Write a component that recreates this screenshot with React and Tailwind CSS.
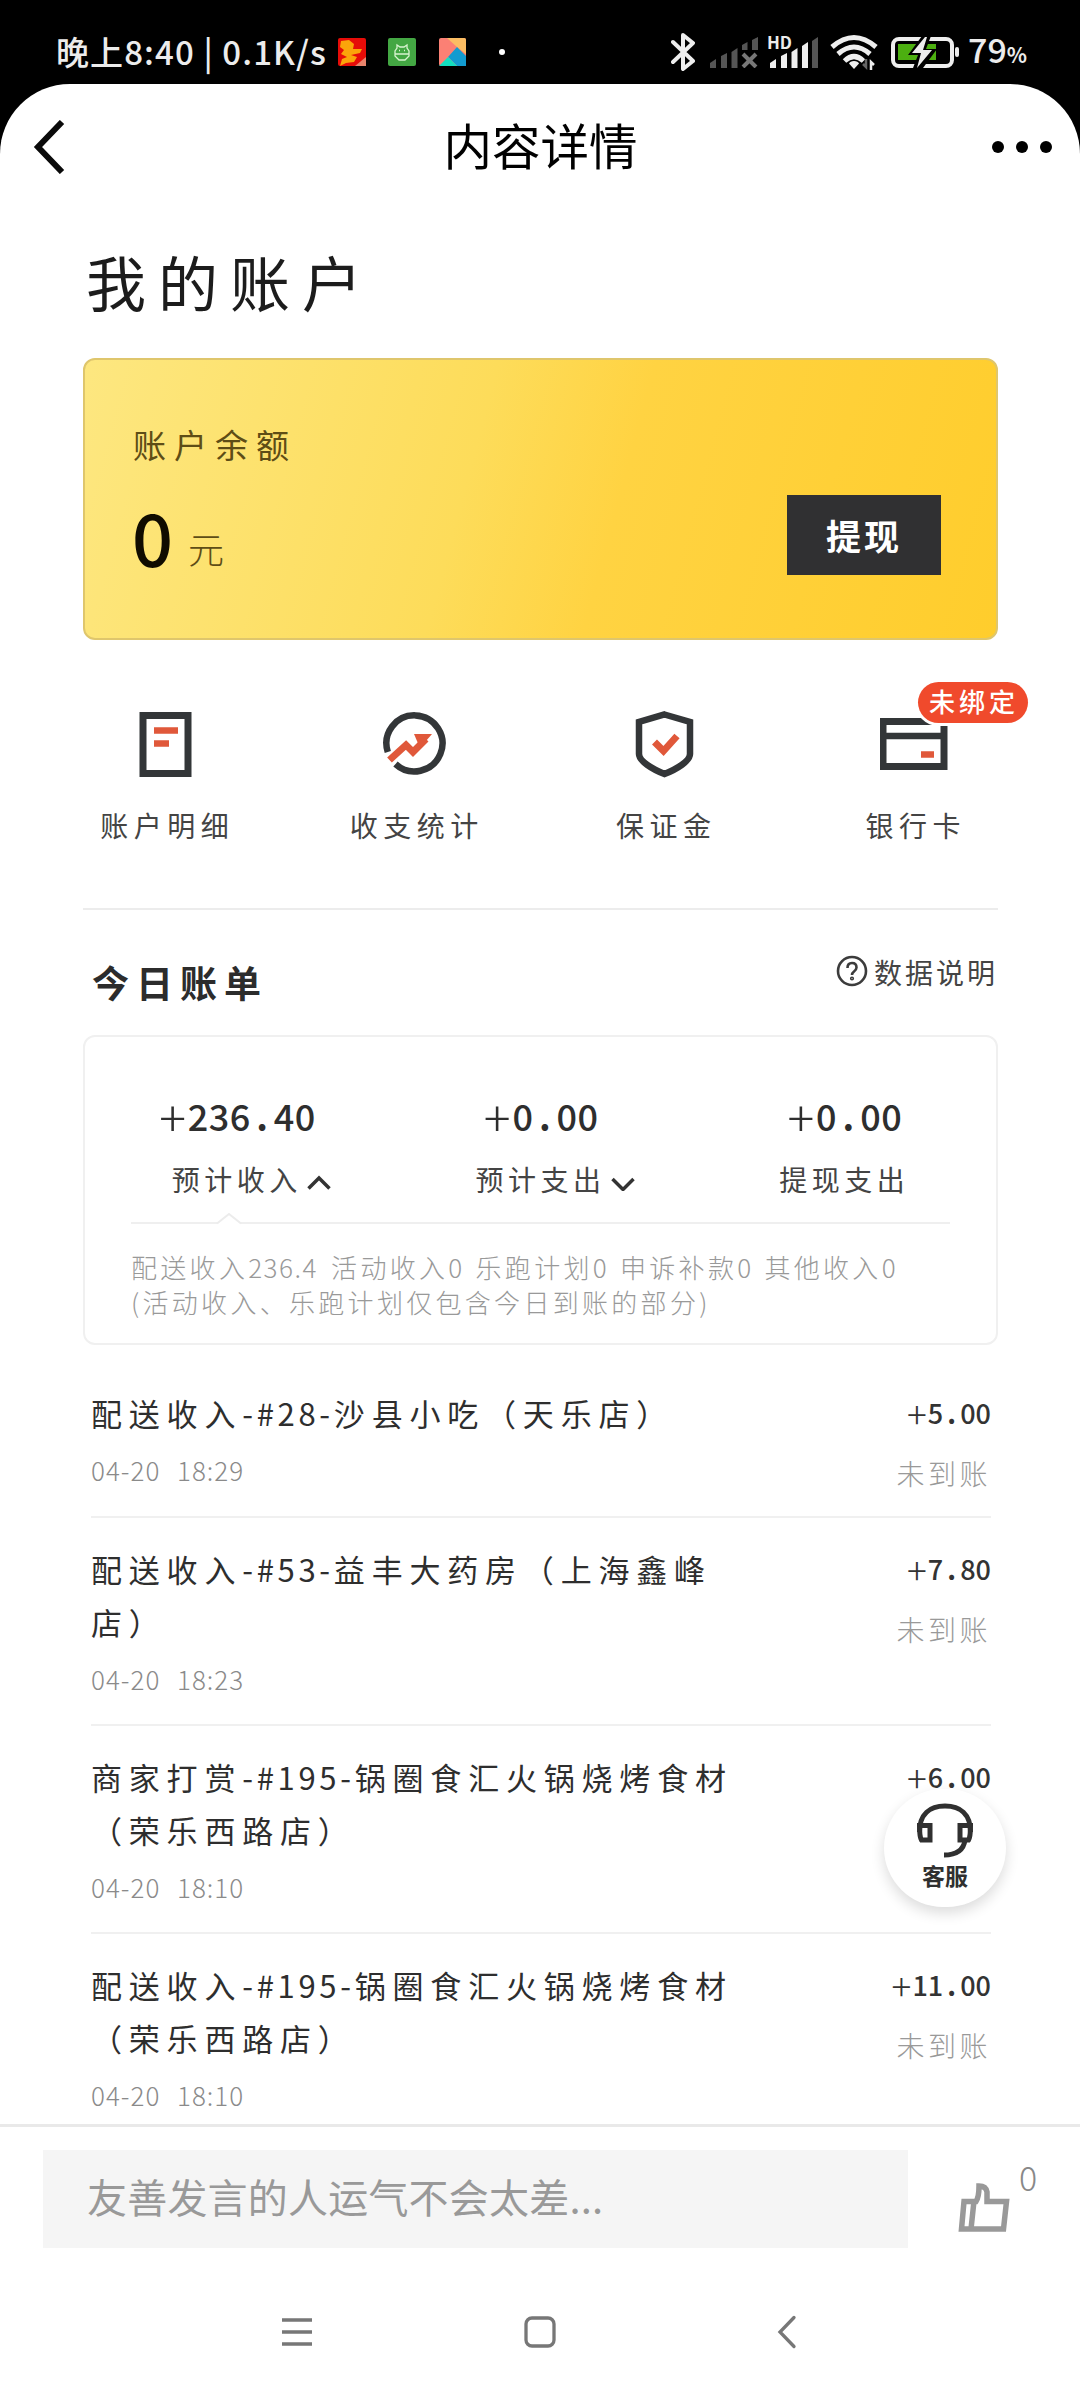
const actions = [
  { label: '账户明细', icon: <DetailIcon /> },
  { label: '收支统计', icon: <StatsIcon /> },
  { label: '保证金', icon: <ShieldIcon /> },
  { label: '银行卡', icon: <BankCardIcon />, badge: '未绑定' },
]

const summary = [
  { value: '+236.40', label: '预计收入', arrow: 'up' },
  { value: '+0.00', label: '预计支出', arrow: 'down' },
  { value: '+0.00', label: '提现支出' },
]

const records = [
  { lines: [['配送收入', '-#28-', '沙县小吃（天乐店）']], time: '04-20 18:29', amount: '+5.00', status: '未到账' },
  { lines: [['配送收入', '-#53-', '益丰大药房（上海鑫峰'], ['店）']], time: '04-20 18:23', amount: '+7.80', status: '未到账' },
  { lines: [['商家打赏', '-#195-', '锅圈食汇火锅烧烤食材'], ['（荣乐西路店）']], time: '04-20 18:10', amount: '+6.00' },
  { lines: [['配送收入', '-#195-', '锅圈食汇火锅烧烤食材'], ['（荣乐西路店）']], time: '04-20 18:10', amount: '+11.00', status: '未到账' },
]

function DetailIcon() {
  return (
    <svg width="68" height="68" viewBox="0 0 68 68" fill="none">
      <rect x="11" y="5.5" width="45" height="58" stroke="#333638" strokeWidth="7" />
      <path d="M22 20.5h24M22 33.5h15" stroke="#e0583a" strokeWidth="6.5" />
    </svg>
  )
}

function StatsIcon() {
  return (
    <svg width="68" height="68" viewBox="0 0 68 68" fill="none">
      <path d="M6.8 42A28 28 0 1 1 14.5 54" stroke="#333638" strokeWidth="6.5" />
      <path d="M8.5 50 25 35l7 7 13-13" stroke="#e0583a" strokeWidth="7" />
      <path d="M33 24h18L39 38z" fill="#e0583a" />
    </svg>
  )
}

function ShieldIcon() {
  return (
    <svg width="68" height="68" viewBox="0 0 68 68" fill="none">
      <path d="M33.5 4.5 59 12v32c0 7-13 15-25.5 20C21 59 8 51 8 44V12z" stroke="#333638" strokeWidth="6.5" />
      <path d="M23.5 32l9 9L46 26" stroke="#e0583a" strokeWidth="7" />
    </svg>
  )
}

function BankCardIcon() {
  return (
    <svg width="68" height="68" viewBox="0 0 68 68" fill="none">
      <rect x="3" y="11.5" width="61" height="45" stroke="#333638" strokeWidth="7" />
      <path d="M3 26h61" stroke="#333638" strokeWidth="6.5" />
      <path d="M41 44.5h13" stroke="#e0583a" strokeWidth="6.5" />
    </svg>
  )
}

function SignalBars({ muted }) {
  return (
    <svg width="48" height="32" viewBox="0 0 48 32">
      <g fill={muted ? '#555' : '#eee'}>
        <path d="M0 32v-5l6-4v9zM11 32V20l6-3v15zM21.5 32V16l6-4v20z" />
        {muted ? (
          <path d="M32 14V9l5.5-3v8zM42 14V4l6-3v13z" />
        ) : (
          <path d="M32 32V10l6-4v26z" />
        )}
      </g>
      {muted ? (
        <path d="M33 18l13 13M46 18 33 31" stroke="#777" strokeWidth="4" />
      ) : (
        <path d="M42 32V5l6-4v31z" fill="#555" />
      )}
    </svg>
  )
}

function StatusBar() {
  return (
    <div className="flex h-[84px] items-center bg-black pt-[20px] text-[#ececec]">
      <div className="mb-[2px] ml-[56px] w-[270px] whitespace-nowrap text-[33px] leading-[32px] font-medium tracking-[1.1px]">
        晚上8:40 | 0.1K/s
      </div>
      <svg className="ml-[12px]" width="28" height="28" viewBox="0 0 28 28">
        <rect width="28" height="28" rx="2" fill="#e60c08" />
        <path d="M3 3l8-1 5 4-1 5h9l-2 4-9 2 6 2-3 5-8 1-6 3 2-7 5-2-6-3 3-4-4-3z" fill="#fba40a" />
        <path d="M17 28l11-9v9z" fill="#e8846c" />
      </svg>
      <svg className="ml-[22px]" width="28" height="28" viewBox="0 0 28 28" fill="none" stroke="#d8f3d0" strokeWidth="1.3">
        <rect width="28" height="28" rx="2" fill="#43a743" stroke="none" />
        <path d="M9 10V7l3 2h4l3-2v3l2 3v5l-4 4h-6l-4-4v-5zM7 16h14M11 12.5h1M16 12.5h1" />
      </svg>
      <svg className="ml-[23px]" width="27" height="28" viewBox="0 0 27 28">
        <rect width="27" height="28" rx="2" fill="#fb8074" />
        <path d="M8 0h17q2 0 2 2v14L18 9z" fill="#fbbd63" />
        <path d="M18 9l9 9v10H18L9 19z" fill="#129bd0" />
        <path d="M0 28l9-9 9 9z" fill="#12dfc0" />
      </svg>
      <div className="ml-[33px] size-[6px] rounded-full bg-white" />

      <svg className="ml-[166px]" width="24" height="40" viewBox="0 0 24 40" fill="none" stroke="#eee" strokeWidth="4" strokeLinejoin="round" strokeLinecap="round">
        <path d="M2 10l20 19-10 8V3l10 8L2 30" />
      </svg>
      <div className="ml-[15px]"><SignalBars muted /></div>
      <div className="relative ml-[12px]">
        <SignalBars />
        <span className="absolute -top-[3px] -left-[3px] text-[17px] leading-[17px] font-bold">HD</span>
      </div>
      <svg className="ml-[12px]" width="48" height="36" viewBox="0 0 48 36" fill="none" stroke="#eee" strokeWidth="5">
        <path d="M2 13Q24-6 46 13M8 20Q24 6 40 20M14.5 27Q24 18 33.5 27" />
        <path d="M24 27q4 0 5 2.5L24 35l-5-5.5Q20 27 24 27z" fill="#eee" stroke="none" />
        <path d="M36 25v8l-3-3" stroke="#666" strokeWidth="2.5" />
        <path d="M41 36v-8l3 3" strokeWidth="2.5" />
      </svg>
      <svg className="ml-[13px]" width="70" height="34" viewBox="0 0 70 34">
        <rect x="2" y="4" width="59" height="27" rx="6" fill="none" stroke="#eee" strokeWidth="4" />
        <rect x="7" y="9" width="38" height="16" fill="#4caf10" />
        <path d="M31 1 17 20h10l-5 13h10l14-19H35l5-13z" fill="#000" />
        <path d="M34 2 21 18h9l-4 15 15-18h-9l4-13z" fill="#eee" />
        <rect x="64" y="12" width="4" height="10" rx="2" fill="#eee" />
      </svg>
      <div className="mb-[1px] ml-[7px] whitespace-nowrap text-[34px] leading-[34px] font-medium">
        79<span className="text-[21px] font-bold">%</span>
      </div>
    </div>
  )
}

function Amount({ value, large }) {
  const [whole, cents] = value.slice(1).split('.')
  return (
    <span className={`inline-flex h-full items-center font-medium ${large ? 'text-[36px] tracking-[0.5px]' : 'text-[27px]'}`}>
      <span className={large ? 'w-[30px] text-center text-[50px] font-light' : 'w-[22px] text-center text-[37px] font-light'}>+</span>
      <span>{whole}</span>
      <span className={large ? 'w-[23px] text-center font-bold' : 'w-[17px] text-center font-bold'}>.</span>
      <span>{cents}</span>
    </span>
  )
}

function Arrow({ direction }) {
  return (
    <svg className="absolute top-[10px] left-full ml-[5px]" width="24" height="16" viewBox="0 0 24 16" fill="none" stroke="#333" strokeWidth="3.5">
      <path d={direction === 'up' ? 'M1.5 13.5 12 3l10.5 10.5' : 'M1.5 4 12 14.5 22.5 4'} />
    </svg>
  )
}

function Record({ record, first }) {
  return (
    <div className={`flex justify-between border-b-2 border-[#f0f0f0] ${first ? 'pt-[41px] pb-[29px]' : 'pt-[24px] pb-[32px]'}`}>
      <div>
        {record.lines.map((parts, i) => (
          <div key={i} className="whitespace-nowrap text-[31px] leading-[53px] tracking-[6.8px] text-[#2e2e2e]">
            {parts.map((part) => (
              <span key={part} className={part.startsWith('-') ? 'tracking-[3.7px]' : ''}>{part}</span>
            ))}
          </div>
        ))}
        <div className="mt-[18px] text-[26px] leading-[26px] font-light tracking-[1px] text-[#8a8a8a] [word-spacing:10px]">
          {record.time}
        </div>
      </div>
      <div className="text-right text-[#333]">
        <div className="h-[54px] leading-[54px]"><Amount value={record.amount} /></div>
        {record.status && (
          <div className="mt-[19px] text-[28px] leading-[28px] font-light tracking-[3.5px] text-[#999]">{record.status}</div>
        )}
      </div>
    </div>
  )
}

export default function App() {
  return (
    <div className="h-[2400px] w-[1080px] overflow-hidden bg-black font-['Noto_Sans_CJK_SC',sans-serif]">
      <StatusBar />
      <div className="flex h-[2316px] flex-col rounded-t-[70px] bg-white">
        <div className="h-[2040px] overflow-hidden">
          {/* Header */}
          <header className="flex h-[126px] items-center justify-between pr-[28px] pl-[33px]">
            <svg width="32" height="54" viewBox="0 0 32 54" fill="none" stroke="#0a0a0a" strokeWidth="6">
              <path d="M29 2 5 27l24 25" />
            </svg>
            <h1 className="mb-[7px] pl-[24px] text-[48.5px] leading-[48px] text-black">内容详情</h1>
            <div className="flex gap-[12px]">
              <span className="size-[12px] rounded-full bg-black" />
              <span className="size-[12px] rounded-full bg-black" />
              <span className="size-[12px] rounded-full bg-black" />
            </div>
          </header>

          <div className="pr-[82px] pl-[83px]">
            <h2 className="flex h-[148px] items-center pb-[7px] pl-[3px] text-[60px] leading-[60px] tracking-[12px] text-[#1c1c1c]">我的账户</h2>

            {/* Balance */}
            <div className="flex h-[282px] justify-between rounded-[12px] border-2 border-[#dfc66c] bg-linear-[105deg,#fde780_0%,#fddc5a_42%,#ffd342_58%,#ffcd2c_100%] pr-[55px] pl-[48px]">
              <div>
                <div className="mt-[68px] text-[33px] leading-[33px] tracking-[8px] text-[#5e4d16]">账户余额</div>
                <div className="mt-[39px] flex items-baseline text-[#100c00]">
                  <span className="-ml-px text-[72px] leading-[72px] font-medium">0</span>
                  <span className="relative -top-[3px] ml-[15px] text-[36px] leading-none font-light text-[#5e4d16]">元</span>
                </div>
              </div>
              <button className="mt-[135px] h-[80px] w-[154px] bg-[#303032] text-[35px] font-bold tracking-[3px] text-white">提现</button>
            </div>
          </div>

          {/* Quick actions */}
          <div className="mx-[41px] grid h-[268px] grid-cols-4 pt-[70px]">
            {actions.map((action) => (
              <div key={action.label} className="relative flex flex-col items-center">
                {action.icon}
                <div className="mt-[33px] pl-[3px] text-[28px] leading-[28px] tracking-[5.5px] text-[#444]">{action.label}</div>
                {action.badge && (
                  <span className="absolute -top-[28px] left-[128px] flex h-[41px] w-[110px] items-center justify-center rounded-full bg-[#f04a2c] pb-[3px] pl-[3px] text-[26px] leading-none font-medium tracking-[4px] text-white ring-3 ring-white">
                    {action.badge}
                  </span>
                )}
              </div>
            ))}
          </div>

          <div className="pr-[82px] pl-[83px]">
            <div className="flex h-[127px] justify-between border-t-2 border-[#ececec]">
              <h3 className="mt-[54px] ml-[9px] text-[37px] leading-[37px] font-bold tracking-[7px] text-[#2c2c2c]">今日账单</h3>
              <div className="mt-[45px] flex h-[32px] items-center text-[#444]">
                <svg width="32" height="32" viewBox="0 0 32 32" fill="none" stroke="#3c3c3c" strokeWidth="2.6">
                  <circle cx="16" cy="16" r="14" />
                  <path d="M11.5 13q0-5 4.5-5t4.5 4.5q0 2-2.5 4-2 1.5-2 3.5" />
                  <circle cx="16" cy="23.5" r="0.8" />
                </svg>
                <span className="mt-[2px] ml-[6px] text-[28px] leading-[28px] tracking-[3px]">数据说明</span>
              </div>
            </div>

            {/* Summary */}
            <div className="h-[310px] rounded-[12px] border-2 border-[#f0f0f0] px-[46px]">
              <div className="-mx-[46px] grid h-[185px] grid-cols-3 pt-[54px] text-center text-[#2e2e2e]">
                {summary.map((item) => (
                  <div key={item.label}>
                    <div className="h-[48px] leading-[48px]"><Amount value={item.value} large /></div>
                    <div className="relative mt-[26px] inline-block text-[28px] leading-[28px] tracking-[4.5px] text-[#444]">
                      {item.label}
                      {item.arrow && <Arrow direction={item.arrow} />}
                    </div>
                  </div>
                ))}
              </div>
              <div className="relative h-[2px] bg-[#efefef]">
                <svg className="absolute -top-[9px] left-[85px]" width="26" height="12" viewBox="0 0 26 12">
                  <path d="M1 10 13 1l12 9v2H1z" fill="#fff" />
                  <path d="M1 10.5 13 1l12 9.5" fill="none" stroke="#ececec" strokeWidth="2" />
                </svg>
              </div>
              <p className="mt-[25px] text-[26px] leading-[35px] font-light tracking-[3.3px] whitespace-nowrap text-[#999] [word-spacing:1px]">
                配送收入<span className="mr-[5px] tracking-[1.5px]">236.4 </span> 活动收入0 乐跑计划0 申诉补款0 其他收入0
                <br />
                (活动收入、乐跑计划仅包含今日到账的部分)
              </p>
            </div>
          </div>

          {/* Records */}
          <div className="pr-[89px] pl-[91px]">
            {records.map((record, i) => (
              <Record key={i} record={record} first={i === 0} />
            ))}
          </div>
        </div>

        {/* Comment bar */}
        <div className="flex h-[124px] border-t-3 border-[#e9e9e9] bg-white pt-[23px] pl-[43px]">
          <div className="h-[98px] w-[865px] shrink-0 bg-[#f5f5f5] pl-[44px] text-[40px] leading-[92px] tracking-[0.2px] text-[#999]">
            友善发言的人运气不会太差...
          </div>
          <svg className="mt-[32px] ml-[50px]" width="52" height="52" viewBox="0 0 52 52" fill="none" stroke="#999" strokeWidth="5.5">
            <path d="M6 19.5h12Q21 15 21 4q7 0 8 6v9.5h19.5L45.5 47H3.5zM16 19l-3 28" />
          </svg>
          <span className="mt-[10px] ml-[9px] text-[34px] leading-[34px] font-light text-[#888]">0</span>
        </div>

        {/* System navigation */}
        <div className="flex h-[152px] items-center bg-white pb-[4px]">
          <svg className="mt-[20px] ml-[282px]" width="30" height="32" viewBox="0 0 30 32" stroke="#777" strokeWidth="3.3">
            <path d="M0 4h30M0 16h30M0 28h30" />
          </svg>
          <svg className="mt-[20px] ml-[212px]" width="32" height="32" viewBox="0 0 32 32" fill="none" stroke="#777" strokeWidth="3.3">
            <rect x="2" y="2" width="28" height="28" rx="6" />
          </svg>
          <svg className="mt-[20px] ml-[221px]" width="20" height="34" viewBox="0 0 20 34" fill="none" stroke="#777" strokeWidth="3.3" strokeLinecap="round">
            <path d="M17 2.5 3 17l14 14.5" />
          </svg>
        </div>
      </div>

      {/* Floating support button */}
      <div className="absolute top-[1789px] left-[884px] flex h-[118px] w-[122px] flex-col items-center rounded-full bg-white pt-[13px] shadow-[0_6px_14px_rgba(0,0,0,0.14)]">
        <svg width="58" height="57" viewBox="0 0 58 57" fill="none" stroke="#303030" strokeWidth="5">
          <path d="M3.5 30C3.5 12 14 4 29 4s25.5 8 25.5 26" />
          <path d="M3.5 23.5H14V38H5.5Q3.5 35 3.5 23.5zM54.5 23.5H44V38h8.5q2-3 2-14.5z" />
          <path d="M49 38q-2 15-21 15" />
        </svg>
        <span className="mt-[4px] text-[23px] leading-[24px] font-bold text-[#303030]">客服</span>
      </div>
    </div>
  )
}
